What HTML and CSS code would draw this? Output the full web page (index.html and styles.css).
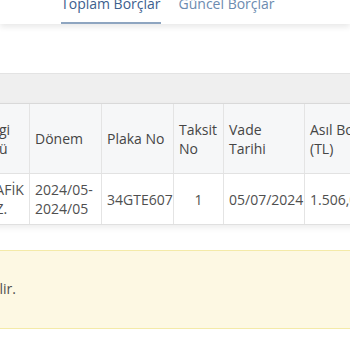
FILE: index.html
```html
<!DOCTYPE html>
<html lang="tr">
<head>
<meta charset="utf-8">
<link rel="stylesheet" href="styles.css">
</head>
<body>
<div class="tabs">
  <div class="tab active">Toplam Borçlar</div>
  <div class="tab">Güncel Borçlar</div>
</div>
<div class="toolbar"></div>
<table class="grid">
  <colgroup>
    <col class="c0"><col class="c1"><col class="c2"><col class="c3"><col class="c4"><col class="c5">
  </colgroup>
  <thead>
    <tr>
      <th><span class="pull">Vergi<br>Türü</span></th>
      <th>Dönem</th>
      <th>Plaka No</th>
      <th>Taksit<br>No</th>
      <th>Vade<br>Tarihi</th>
      <th>Asıl Borç<br>(TL)</th>
    </tr>
  </thead>
  <tbody>
    <tr>
      <td>TRAFİK<br>CEZ.</td>
      <td>2024/05-<br>2024/05</td>
      <td>34GTE607</td>
      <td class="center">1</td>
      <td>05/07/2024</td>
      <td>1.506,00</td>
    </tr>
  </tbody>
</table>
<div class="alert">
  <div class="alert-text"><span>Ödeme işlemleri banka hesabınızdan yapılabilir.</span></div>
</div>
</body>
</html>
```

FILE: styles.css
```css
html, body {
  margin: 0;
  padding: 0;
  overflow: hidden;
  background: #ffffff;
}
body {
  font-family: "Open Sans", "Noto Sans", sans-serif;
  font-size: 14px;
  color: #4f4f4f;
  width: 350px;
  height: 350px;
}
.tabs {
  display: flex;
  gap: 18px;
  padding-left: 61px;
  margin-top: -6px;
  background: #ffffff;
  box-shadow: 0 3px 6px rgba(0, 0, 0, 0.09);
  position: relative;
}
.tab {
  font-size: 14px;
  line-height: 19px;
  padding-bottom: 9px;
  border-bottom: 2px solid transparent;
  color: #6c8bb0;
}
.tab.active {
  color: #3c608e;
  border-bottom-color: #8ea5c0;
}
.toolbar {
  margin-top: 49px;
  height: 29px;
  background: #efefef;
  border-top: 1px solid #e3e3e3;
}
.grid {
  margin-left: -27px;
  border-collapse: collapse;
  table-layout: fixed;
  width: 421px;
  box-shadow: 0 3px 6px rgba(0, 0, 0, 0.07);
}
.c0 { width: 56px; }
.c1 { width: 72px; }
.c2 { width: 72px; }
.c3 { width: 50px; }
.c4 { width: 81px; }
.c5 { width: 90px; }
.grid th, .grid td {
  text-align: left;
  font-weight: 400;
  line-height: 19px;
  padding: 0 5px;
  vertical-align: middle;
  border-left: 1px solid #e4e4e4;
  white-space: nowrap;
  overflow: hidden;
}
.grid th {
  height: 69px;
  background: #f6f7f8;
  color: #454545;
  border-top: 1px solid #d9d9d9;
  border-bottom: 1px solid #e2e2e2;
}
.grid td {
  height: 50px;
  background: #ffffff;
  color: #4f4f4f;
  border-bottom: 1px solid #e0e0e0;
}
.grid .pull {
  display: block;
  margin-left: -2px;
}
.grid .center {
  text-align: center;
}
.alert {
  margin-top: 25px;
  height: 74px;
  padding-bottom: 3px;
  background: #fdf8e3;
  border-top: 1px solid #f4eaa8;
  border-bottom: 1px solid #f4eaa8;
  display: flex;
  align-items: center;
}
.alert-text {
  width: 16px;
  display: flex;
  justify-content: flex-end;
  white-space: nowrap;
  color: #4f4f4f;
  line-height: 19px;
}
```
